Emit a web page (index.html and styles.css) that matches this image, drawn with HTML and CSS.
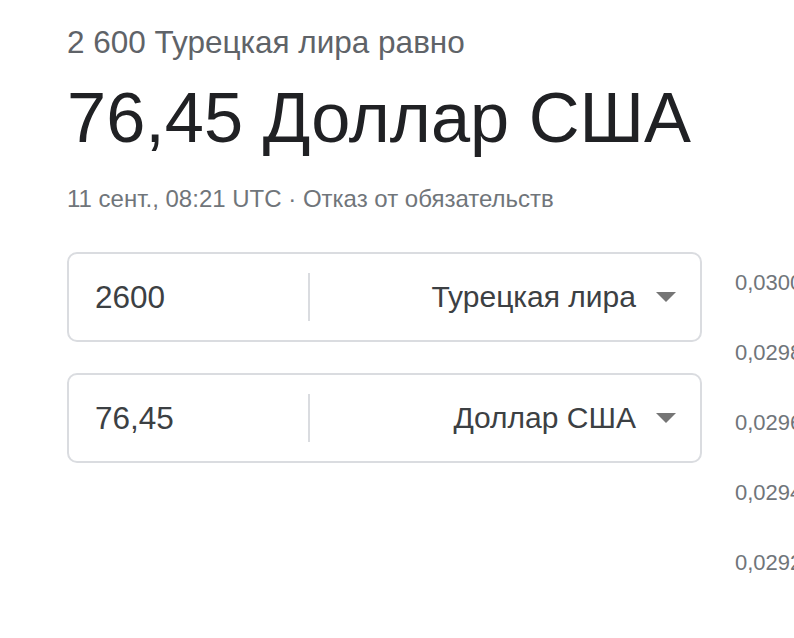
FILE: index.html
```html
<!DOCTYPE html>
<html lang="ru">
<head>
<meta charset="utf-8">
<link rel="stylesheet" href="styles.css">
</head>
<body>
<div class="page">
  <div class="main">
    <div class="lead">2 600 Турецкая лира равно</div>
    <div class="result">76,45 Доллар США</div>
    <div class="meta">11 сент., 08:21 UTC · Отказ от обязательств</div>
    <div class="boxes">
      <div class="box">
        <div class="amount">2600</div>
        <div class="divider"></div>
        <div class="currency">Турецкая лира</div>
        <div class="arrow"></div>
      </div>
      <div class="box">
        <div class="amount">76,45</div>
        <div class="divider"></div>
        <div class="currency">Доллар США</div>
        <div class="arrow"></div>
      </div>
    </div>
  </div>
  <div class="axis">
    <div class="tick">0,0300</div>
    <div class="tick">0,0298</div>
    <div class="tick">0,0296</div>
    <div class="tick">0,0294</div>
    <div class="tick">0,0292</div>
  </div>
</div>
</body>
</html>
```
FILE: styles.css
```css
html, body {
  margin: 0;
  padding: 0;
  background: #fff;
  overflow: hidden;
}
body {
  font-family: "Liberation Sans", Arial, sans-serif;
  width: 794px;
  height: 638px;
}
.page {
  display: flex;
  padding-left: 67px;
  white-space: nowrap;
}
.main {
  width: 635px;
  flex: none;
}
.lead {
  margin-top: 24px;
  font-size: 31.5px;
  line-height: 36px;
  color: #5f6368;
}
.result {
  margin-top: 16px;
  font-size: 70.4px;
  line-height: 84px;
  color: #202124;
}
.meta {
  margin-top: 24px;
  font-size: 24px;
  line-height: 30px;
  color: #70757a;
}
.boxes {
  margin-top: 38px;
  display: flex;
  flex-direction: column;
  gap: 31px;
}
.box {
  box-sizing: border-box;
  height: 90px;
  border: 2px solid #dadce0;
  border-radius: 10px;
  display: flex;
  align-items: center;
  padding: 0 24px 0 26px;
}
.amount {
  width: 213px;
  font-size: 31.5px;
  color: #3c4043;
}
.divider {
  width: 2px;
  height: 48px;
  background: #dadce0;
}
.currency {
  flex: 1;
  text-align: right;
  font-size: 30px;
  color: #3c4043;
}
.arrow {
  margin-left: 20px;
  width: 0;
  height: 0;
  border-left: 10px solid transparent;
  border-right: 10px solid transparent;
  border-top: 10px solid #757575;
}
.axis {
  margin-left: 33px;
  padding-top: 271px;
  display: flex;
  flex-direction: column;
  gap: 46px;
}
.tick {
  font-size: 22px;
  line-height: 24px;
  color: #70757a;
}
```
